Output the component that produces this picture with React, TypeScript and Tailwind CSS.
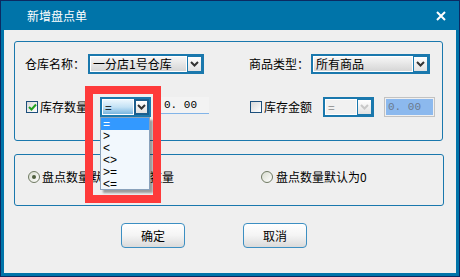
import React from "react";

const font = { fontFamily: '"Noto Sans CJK SC", "Noto Sans", sans-serif' };

const Chevron = ({ light = false }: { light?: boolean }) => (
  <svg width="9" height="6" viewBox="0 0 9 6">
    <path
      d="M1 1 L4.5 4.5 L8 1"
      fill="none"
      stroke={light ? "#c8c8c8" : "#333"}
      strokeWidth="2"
    />
  </svg>
);

const Combo = ({
  text,
  width,
  variant = "normal",
}: {
  text: string;
  width: string;
  variant?: "normal" | "focus" | "disabled";
}) => {
  const area =
    variant === "focus"
      ? "bg-gradient-to-b from-[#eaf6fd] via-[#c4e2f5] to-[#78b6e0]"
      : variant === "disabled"
      ? "bg-[#f1f1f1]"
      : "bg-gradient-to-b from-[#f6f6f6] to-[#d6d6d6]";
  const btnBorder = variant === "focus" ? "border-2 border-[#1b5e8e]" : "border border-[#1a78ad]";
  return (
    <div className={`${width} h-[20px] border-2 border-[#1a78ad] bg-white flex`}>
      <div
        className={`flex-1 m-px ${area} flex items-center pl-[2px] text-[12px] leading-none ${
          variant === "disabled" ? "text-[#8a8a8a]" : "text-black"
        }`}
      >
        {text}
      </div>
      <div
        className={`w-[15px] ${btnBorder} bg-gradient-to-b from-white to-[#e2e2e2] flex items-center justify-center`}
      >
        <Chevron light={variant === "disabled"} />
      </div>
    </div>
  );
};

const CheckBox = ({ checked }: { checked: boolean }) => (
  <div className="w-[12px] h-[12px] border border-[#1c4f7c] bg-gradient-to-br from-[#d8d8d8] to-white flex items-center justify-center">
    {checked && (
      <svg width="9" height="8" viewBox="0 0 9 8">
        <path d="M1 4 L3.5 6.5 L8 1.5" fill="none" stroke="#21a121" strokeWidth="2" />
      </svg>
    )}
  </div>
);

const Radio = ({ checked }: { checked: boolean }) => (
  <div className="w-[12px] h-[12px] rounded-full border border-[#6f7a62] bg-gradient-to-br from-[#d8dccf] to-white flex items-center justify-center">
    {checked && <div className="w-[4px] h-[4px] rounded-full bg-[#4d5d3c]" />}
  </div>
);

const Button = ({ label, className = "" }: { label: string; className?: string }) => (
  <div
    className={`w-[64px] h-[25px] rounded-[4px] border border-[#3c8fc2] bg-gradient-to-b from-white via-[#f4f4f4] to-[#dadada] flex items-center justify-center text-[12px] text-black ${className}`}
  >
    {label}
  </div>
);

export default function App() {
  const options = ["=", ">", "<", "<>", ">=", "<="];
  return (
    <div className="w-[460px] h-[277px] bg-[#0074a9] border border-[#0b2a62] flex flex-col" style={font}>
      {/* title bar */}
      <div className="h-[29px] flex items-center pl-[26px] pr-[13px] text-white text-[12px]">
        <span className="flex-1">新增盘点单</span>
        <svg width="10" height="10" viewBox="0 0 10 10">
          <path d="M1 1 L9 9 M9 1 L1 9" stroke="white" strokeWidth="2" />
        </svg>
      </div>

      {/* body */}
      <div className="relative flex-1 mx-[3px] mb-[3px] bg-[#efefef] flex flex-col text-[12px] text-black">
        {/* group 1 */}
        <div className="ml-[10px] mt-[11px] w-[429px] h-[100px] border border-[#1a78ad] rounded-[3px] flex flex-col">
          <div className="mt-[12px] h-[20px] flex items-center">
            <span className="ml-[10px] w-[60px]">仓库名称：</span>
            <div className="ml-[3px]">
              <Combo text="一分店1号仓库" width="w-[116px]" />
            </div>
            <span className="ml-[45px] w-[60px]">商品类型：</span>
            <div className="ml-[2px]">
              <Combo text="所有商品" width="w-[119px]" />
            </div>
          </div>
          <div className="mt-[23px] h-[20px] flex items-center">
            <div className="ml-[11px]">
              <CheckBox checked />
            </div>
            <span className="ml-[2px] w-[48px]">库存数量</span>
            <div className="ml-[12px]">
              <Combo text="=" width="w-[51px]" variant="focus" />
            </div>
            <div
              className="ml-[9px] w-[49px] h-[17px] self-start border-b border-[#82b4e8] bg-[#f3f3f3] flex items-center pl-[4px] text-[11px]"
              style={{ fontFamily: '"Liberation Mono", monospace' }}
            >
              0. 00
            </div>
            <div className="ml-[41px]">
              <CheckBox checked={false} />
            </div>
            <span className="ml-[2px] w-[48px]">库存金额</span>
            <div className="ml-[11px]">
              <Combo text="=" width="w-[51px]" variant="disabled" />
            </div>
            <div className="ml-[10px] w-[51px] h-[20px] border border-[#c2c2c2] bg-[#f0f0f0] p-px">
              <div
                className="h-full bg-[#8cb9ee] flex items-center pl-[2px] text-[11px] text-[#6a7a8e]"
                style={{ fontFamily: '"Liberation Mono", monospace' }}
              >
                0. 00
              </div>
            </div>
          </div>
        </div>

        {/* group 2 */}
        <div className="ml-[10px] mt-[13px] w-[430px] h-[52px] border border-[#1a78ad] rounded-[3px] flex flex-col">
          <div className="mt-[15px] h-[14px] flex items-center">
            <div className="ml-[13px]">
              <Radio checked />
            </div>
            <span className="ml-[2px] w-[132px]">盘点数量默认为库存数量</span>
            <div className="ml-[87px]">
              <Radio checked={false} />
            </div>
            <span className="ml-[3px]">盘点数量默认为0</span>
          </div>
        </div>

        {/* buttons */}
        <div className="mt-[17px] flex">
          <Button label="确定" className="ml-[117px]" />
          <Button label="取消" className="ml-[58px]" />
        </div>

        {/* open dropdown list */}
        <div className="absolute left-[96px] top-[87px] w-[50px] h-[73px] border border-[#8aa2bc] bg-[#f2f8fd] shadow-[3px_3px_2px_rgba(0,0,0,0.35)] flex flex-col">
          {options.map((o, i) => (
            <div
              key={o}
              className={`h-[12px] flex items-center pl-[2px] text-[12px] leading-none ${
                i === 0 ? "bg-[#3399ff] text-white" : "text-black"
              }`}
              style={{ fontFamily: '"Liberation Sans", sans-serif' }}
            >
              {o}
            </div>
          ))}
        </div>

        {/* red annotation box */}
        <div className="absolute left-[81px] top-[56px] w-[76px] h-[117px] border-[8px] border-[#fe3a3a]" />
      </div>
    </div>
  );
}
